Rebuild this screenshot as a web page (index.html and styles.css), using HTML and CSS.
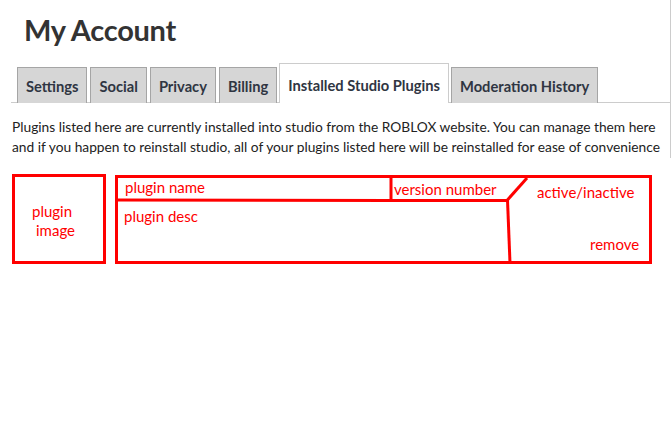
FILE: index.html
```html
<!DOCTYPE html>
<html lang="en">
<head>
    <meta charset="UTF-8">
    <meta name="viewport" content="width=device-width, initial-scale=1.0">
    <title>My Account</title>
    <link rel="stylesheet" href="styles.css">
</head>
<body>
    <div class="account">
        <h1 class="title">My Account</h1>
        <ul class="tabs">
            <li class="tab">Settings</li>
            <li class="tab">Social</li>
            <li class="tab">Privacy</li>
            <li class="tab">Billing</li>
            <li class="tab active">Installed Studio Plugins</li>
            <li class="tab">Moderation History</li>
        </ul>
        <p class="intro">Plugins listed here are currently installed into studio from the ROBLOX website. You can manage them here and if you happen to reinstall studio, all of your plugins listed here will be reinstalled for ease of convenience</p>
    </div>

    <!-- mockup of a plugin row -->
    <svg class="sketch" viewBox="0 160 671 110" width="671" height="110">
        <g fill="none" stroke="#ff0000" stroke-width="3">
            <rect x="13.5" y="177.5" width="91" height="87"/>
            <rect x="116.5" y="178.5" width="534" height="86"/>
            <polyline points="116,202 390,202.5 507,202.5"/>
            <line x1="391" y1="177" x2="391" y2="202"/>
            <line x1="507" y1="202.5" x2="527" y2="180"/>
            <line x1="507.5" y1="202" x2="510" y2="265"/>
        </g>
        <g class="label">
            <text x="32" y="219">plugin</text>
            <text x="36" y="238">image</text>
            <text x="125" y="195">plugin name</text>
            <text x="394" y="197">version number</text>
            <text x="537" y="200">active/inactive</text>
            <text x="124" y="224">plugin desc</text>
            <text x="590" y="252">remove</text>
        </g>
    </svg>
</body>
</html>
```

FILE: styles.css
```css
body {
    font-family: Lato, "Open Sans", sans-serif;
    margin: 0;
    padding: 0;
    color: #333;
    background: #fff;
}

.account {
    width: 670px;
    border-right: 1px solid #ccc;
    padding-bottom: 1px;
}

.title {
    margin: 0;
    padding: 12px 0 0 24px;
    font-size: 29px;
    line-height: 36px;
    font-weight: 700;
    color: #333;
    letter-spacing: -0.3px;
}

.tabs {
    list-style: none;
    display: flex;
    align-items: flex-end;
    gap: 3px;
    margin: 15px 0 0 11px;
    padding: 0 0 0 6px;
    border-bottom: 1px solid #ccc;
    height: 39px;
}

.tab {
    box-sizing: border-box;
    height: 36px;
    margin-bottom: -1px;
    padding: 0 8px;
    display: flex;
    align-items: center;
    background: #d6d6d6;
    border: 1px solid #a5a5a5;
    border-bottom: none;
    font-size: 14.7px;
    font-weight: 700;
    color: #2f3542;
}

.tab.active {
    height: 40px;
    background: #fff;
    border-color: #ccc;
    margin-left: -1px;
    margin-right: -1px;
    padding-top: 2px;
}

.intro {
    margin: 14px 0 0 12px;
    font-size: 13.75px;
    line-height: 20px;
    color: #222;
}

.sketch {
    display: block;
}

.label text {
    font-family: Lato, sans-serif;
    font-size: 15px;
    fill: #ff0000;
}
```
